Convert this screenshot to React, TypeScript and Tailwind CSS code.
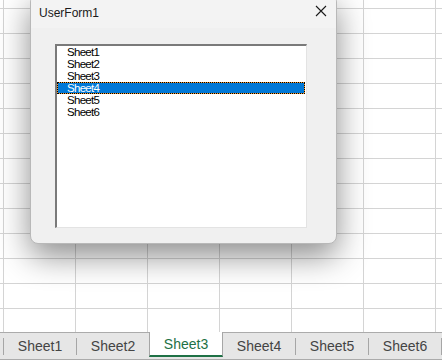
import React from "react";

const sheets = ["Sheet1", "Sheet2", "Sheet3", "Sheet4", "Sheet5", "Sheet6"];

function CellGrid() {
  const cols = 8;
  const rows = 14;
  const cells = [];
  for (let r = 0; r < rows; r++) {
    for (let c = 0; c < cols; c++) {
      cells.push(
        <div
          key={r + "-" + c}
          className={c < cols - 1 ? "border-r border-b border-[#d4d4d4]" : "border-b border-[#d4d4d4]"}
        />
      );
    }
  }
  return (
    <div className="h-[332px] overflow-hidden bg-white">
      <div className="grid grid-cols-[4px_repeat(6,72px)_1fr] grid-rows-[9px] auto-rows-[25px]">
        {cells}
      </div>
    </div>
  );
}

function SheetTabs() {
  return (
    <div className="h-[28px] border-t border-b border-[#ababab] bg-[#e6e6e6] flex items-center pl-[3px] font-['Liberation_Sans',sans-serif] text-[14px]">
      {sheets.map((s, i) => {
        if (s === "Sheet3") {
          return (
            <div
              key={s}
              className="-mt-px self-start h-[25px] w-[74px] pt-[2px] bg-white border-x border-b-2 border-x-[#a6a6a6] border-b-[#1e7145] text-[#1e7145] flex items-center justify-center"
            >
              {s}
            </div>
          );
        }
        const showSep = i !== 3;
        return (
          <React.Fragment key={s}>
            {showSep && <div className="w-px h-[17px] bg-[#a6a6a6]" />}
            <div className="w-[72px] h-full pt-px flex items-center justify-center text-[#444444]">{s}</div>
            {i === sheets.length - 1 && <div className="w-px h-[17px] bg-[#a6a6a6]" />}
          </React.Fragment>
        );
      })}
    </div>
  );
}

function ListBox() {
  return (
    <div className="ml-[24px] mt-[16px] w-[252px] h-[184px] bg-white border-t-2 border-l-2 border-t-[#7a7a7a] border-l-[#7a7a7a] border-r border-b border-r-[#e3e3e3] border-b-[#e3e3e3] font-['Liberation_Sans',sans-serif] text-[11.5px] tracking-[-0.7px] leading-[12px]">
      <div className="flex flex-col">
        {sheets.map((s) =>
          s === "Sheet4" ? (
            <div key={s} className="bg-[#f59a2c] mr-px">
              <div className="h-[12px] border border-dotted border-black bg-[#0078d7] bg-clip-padding text-white pl-[9px] leading-[10px]">
                {s}
              </div>
            </div>
          ) : (
            <div key={s} className="h-[12px] pl-[10px] text-black">
              {s}
            </div>
          )
        )}
      </div>
    </div>
  );
}

function UserForm() {
  return (
    <div className="absolute left-[30px] top-[-6px] w-[307px] h-[250px] rounded-[8px] border border-[#b8b8b8] bg-[#f0f0f0] overflow-hidden shadow-[0_12px_32px_rgba(0,0,0,0.45)]">
      <div className="h-[33px] bg-[#f3f3f3] flex items-end justify-between pb-[8px] pl-[8px] pr-[9px]">
        <span className="font-['Liberation_Sans',sans-serif] text-[12px] text-[#1a1a1a] leading-[14px]">UserForm1</span>
        <svg width="12" height="12" viewBox="0 0 12 12" className="mb-[3px]">
          <path d="M1 1 L11 11 M11 1 L1 11" stroke="#1a1a1a" strokeWidth="1.1" />
        </svg>
      </div>
      <ListBox />
    </div>
  );
}

export default function App() {
  return (
    <div className="relative w-[442px] h-[362px] overflow-hidden bg-white">
      <CellGrid />
      <SheetTabs />
      <UserForm />
    </div>
  );
}
